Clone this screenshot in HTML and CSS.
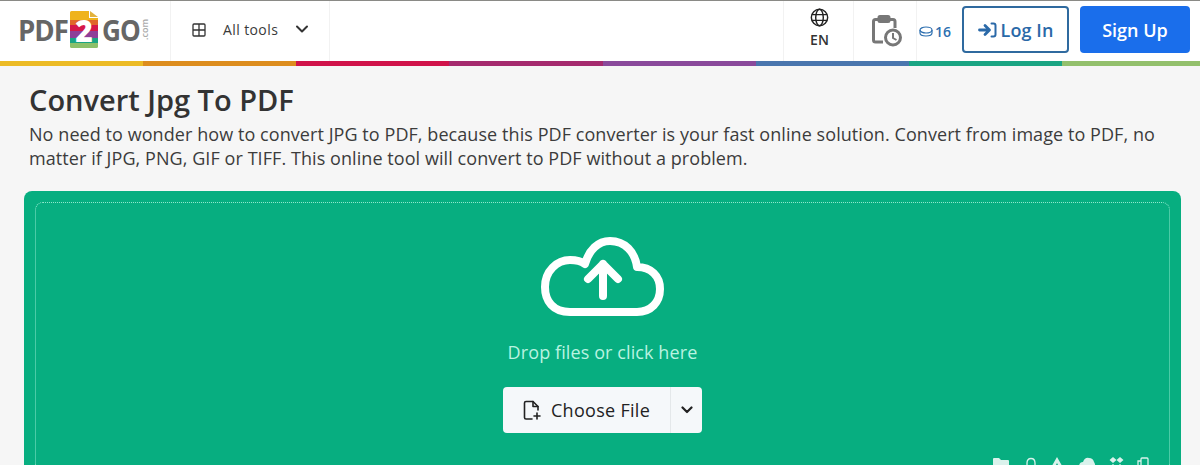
FILE: index.html
```html
<!DOCTYPE html>
<html lang="en">
<head>
    <meta charset="UTF-8">
    <meta name="viewport" content="width=device-width, initial-scale=1.0">
    <title>Convert Jpg To PDF</title>
    <link rel="stylesheet" href="styles.css">
</head>
<body>
    <header class="topbar">
        <a class="logo">
            <span class="logo-word logo-pdf">PDF</span>
            <span class="logo-badge">
                <svg width="28" height="37" viewBox="0 0 28 37">
                    <path d="M1.500 0H19V7H28V9H0V1.500Q0 0 1.500 0Z" fill="#efb31c"/>
                    <path d="M20 0L28 6H20Z" fill="#e3b23c"/>
                    <rect y="9" width="28" height="5" fill="#e0662a"/>
                    <rect y="14" width="28" height="6" fill="#d5174a"/>
                    <rect y="20" width="28" height="7" fill="#8e3f98"/>
                    <rect y="27" width="28" height="5" fill="#1aa583"/>
                    <path d="M0 32H28V35.500Q28 37 26.500 37H1.500Q0 37 0 35.500Z" fill="#8cc06a"/>
                </svg>
                <span class="logo-two">2</span>
            </span>
            <span class="logo-word logo-go">GO</span>
            <span class="logo-com">.com</span>
        </a>
        <button class="tools-btn">
            <svg width="14" height="14" viewBox="0 0 14 14" fill="none" stroke="#333" stroke-width="1.300">
                <rect x="1" y="1" width="12" height="12" rx="1"/>
                <path d="M7 1V13M1 7H13"/>
            </svg>
            <span>All tools</span>
            <svg class="tools-caret" width="14" height="9" viewBox="0 0 14 9" fill="none" stroke="#333" stroke-width="2" stroke-linecap="round" stroke-linejoin="round">
                <path d="M2 1.500L7 6.500L12 1.500"/>
            </svg>
        </button>
        <div class="spacer"></div>
        <div class="lang-cell">
            <svg width="19" height="19" viewBox="0 0 20 20" fill="none" stroke="#222" stroke-width="1.500">
                <circle cx="10" cy="10" r="8.600"/>
                <ellipse cx="10" cy="10" rx="4" ry="8.600"/>
                <path d="M2 7H18M2 13H18"/>
            </svg>
            <span>EN</span>
        </div>
        <div class="history-cell">
            <svg width="30" height="32" viewBox="0 0 30 32" fill="none" stroke="#777" stroke-width="3">
                <path d="M11 27H3.500Q1.500 27 1.500 25V6.500Q1.500 4.500 3.500 4.500H21Q23 4.500 23 6.500V13"/>
                <rect x="7" y="1.500" width="10" height="5" rx="1" fill="#777"/>
                <circle cx="21" cy="22.500" r="7.500" fill="#fff"/>
                <path d="M21 18V23L24.500 25" stroke-width="2"/>
            </svg>
        </div>
        <div class="credits">
            <svg width="14" height="11" viewBox="0 0 14 11" fill="none" stroke="#2d6fb0" stroke-width="1.200">
                <ellipse cx="7" cy="4" rx="6" ry="3"/>
                <path d="M1 4V7C1 8.700 3.700 10 7 10S13 8.700 13 7V4"/>
            </svg>
            <span>16</span>
        </div>
        <button class="login-btn">
            <svg width="19" height="16" viewBox="0 0 19 16" fill="none" stroke="#2a69a8" stroke-width="2.800" stroke-linecap="round" stroke-linejoin="round">
                <path d="M1.500 8H10M7 3.500L11.500 8L7 12.500"/>
                <path d="M13.500 1.500H15.500Q17.500 1.500 17.500 3.500V12.500Q17.500 14.500 15.500 14.500H13.500" stroke-width="2"/>
            </svg>
            <span>Log In</span>
        </button>
        <button class="signup-btn">Sign Up</button>
    </header>

    <div class="rainbow">
        <i class="c1"></i><i class="c2"></i><i class="c3"></i><i class="c4"></i>
        <i class="c5"></i><i class="c6"></i><i class="c7"></i><i class="c8"></i>
    </div>

    <main class="content">
        <h1>Convert Jpg To PDF</h1>
        <p class="intro">No need to wonder how to convert JPG to PDF, because this PDF converter is your fast online solution. Convert from image to PDF, no matter if JPG, PNG, GIF or TIFF. This online tool will convert to PDF without a problem.</p>

        <section class="dropzone">
            <div class="dropzone-inner">
                <svg class="cloud" width="126" height="82" viewBox="0 0 126 82" fill="none" stroke="#fff" stroke-width="8" stroke-linecap="round" stroke-linejoin="round">
                    <path d="M30 77C13 77 5 66 5 52C5 36 17 25 30 25C36 25 41 26 45 29C49 15 58 6 70 6C85 6 95 17 97 32C111 32 120 41 120 54C120 67 111 77 97 77Z"/>
                    <path d="M63 61V29M48 44L63 29L78 44"/>
                </svg>
                <p class="drop-text">Drop files or click here</p>
                <div class="choose">
                    <button class="choose-main">
                        <svg width="19" height="21" viewBox="0 0 19 21" fill="none" stroke="#222" stroke-width="1.600" stroke-linecap="round" stroke-linejoin="round">
                            <path d="M9 19H3Q1.500 19 1.500 17.500V3Q1.500 1.500 3 1.500H10L15 6.500V10"/>
                            <path d="M10 1.500V6.500H15"/>
                            <path d="M14 13V19M11 16H17"/>
                        </svg>
                        <span>Choose File</span>
                    </button>
                    <button class="choose-more">
                        <svg width="12" height="8" viewBox="0 0 12 8" fill="none" stroke="#222" stroke-width="2.200" stroke-linecap="round" stroke-linejoin="round">
                            <path d="M1.500 1.500L6 6L10.500 1.500"/>
                        </svg>
                    </button>
                </div>
                <div class="sources">
                    <svg width="16" height="14" viewBox="0 0 16 14" fill="#fff" opacity=".85"><path d="M0 2Q0 1 1 1H6L8 3H15Q16 3 16 4V13H0Z"/></svg>
                    <svg width="14" height="14" viewBox="0 0 14 14" fill="none" stroke="#fff" stroke-width="1.300" opacity=".85"><path d="M5 12V6Q5 1.500 9 1.500T13 6V10"/></svg>
                    <svg width="16" height="14" viewBox="0 0 16 14" fill="#fff" opacity=".85"><path d="M8 0L16 14H0ZM8 6L5 12H11Z" fill-rule="evenodd"/></svg>
                    <svg width="18" height="14" viewBox="0 0 18 14" fill="#fff" opacity=".85"><path d="M1 10Q1 5 5 5Q7 0 11 1Q15 1 16 5Q18 8 17 14H4Q1 13 1 10Z"/></svg>
                    <svg width="15" height="14" viewBox="0 0 14 14" fill="#fff" opacity=".85"><path d="M3.500 0L7 3L3.500 6L0 3ZM10.500 0L14 3L10.500 6L7 3ZM3.500 7L7 10L3.500 13L0 10ZM10.500 7L14 10L10.500 13L7 10Z"/></svg>
                    <svg width="12" height="14" viewBox="0 0 12 14" fill="none" stroke="#fff" stroke-width="1.300" opacity=".85"><rect x="4" y="1" width="7" height="12" rx="1"/><path d="M4 4H1V13H4"/></svg>
                </div>
            </div>
        </section>
    </main>
</body>
</html>
```

FILE: styles.css
```css
* {
    margin: 0;
    padding: 0;
    box-sizing: border-box;
}

html, body {
    height: 465px;
    overflow: hidden;
}

body {
    font-family: "Open Sans", "Liberation Sans", sans-serif;
    background: #f6f6f6;
    color: #333;
}

button {
    font-family: inherit;
    border: none;
    background: none;
}

/* top bar */
.topbar {
    display: flex;
    align-items: stretch;
    height: 61px;
    background: #fff;
    border-top: 1px solid #8a8a86;
}

.logo {
    width: 171px;
    padding: 0 0 3px 18px;
    display: flex;
    align-items: center;
    border-right: 1px solid #f2f2f2;
}

.logo-word {
    font-size: 29px;
    font-weight: 700;
    color: #666;
    letter-spacing: -1px;
    transform-origin: left;
}

.logo-pdf {
    width: 52px;
    transform: scaleX(.95);
}

.logo-go {
    width: 38px;
    margin-left: 4px;
    transform: scaleX(.9);
}

.logo-badge {
    position: relative;
    display: flex;
    width: 28px;
    height: 37px;
}

.logo-two {
    position: absolute;
    inset: 0;
    text-align: center;
    color: #fff;
    font-size: 30px;
    font-weight: 800;
    line-height: 39px;
}

.logo-com {
    writing-mode: vertical-rl;
    transform: rotate(180deg);
    font-size: 9px;
    font-weight: 600;
    color: #aaa;
    margin-left: -2px;
}

.tools-btn {
    width: 159px;
    display: flex;
    align-items: center;
    padding: 0 0 3px 21px;
    font-size: 14px;
    font-weight: 500;
    color: #3a3a3a;
    letter-spacing: .4px;
    border-right: 1px solid #f2f2f2;
}

.tools-btn span {
    margin-left: 17px;
}

.tools-caret {
    margin-left: 17px;
}

.spacer {
    flex: 1;
}

.lang-cell {
    width: 71px;
    display: flex;
    flex-direction: column;
    align-items: center;
    justify-content: center;
    gap: 4px;
    padding: 0 0 6px 2px;
    font-size: 14px;
    line-height: 18px;
    font-weight: 600;
    color: #333;
    border-left: 1px solid #f2f2f2;
    border-right: 1px solid #f2f2f2;
}

.history-cell {
    width: 63px;
    display: flex;
    align-items: center;
    justify-content: center;
    padding: 0 0 1px 3px;
    border-right: 1px solid #f2f2f2;
}

.credits {
    width: 44px;
    margin-right: 1px;
    padding-right: 8px;
    display: flex;
    align-items: center;
    justify-content: center;
    gap: 2px;
    font-size: 14px;
    font-weight: 600;
    color: #2d6fb0;
}

.login-btn {
    width: 107px;
    height: 47px;
    margin-top: 5px;
    display: flex;
    align-items: center;
    justify-content: center;
    gap: 4px;
    font-size: 18px;
    font-weight: 600;
    color: #2a69a8;
    letter-spacing: .1px;
    border: 2px solid #2f6a9f;
    border-radius: 4px;
}

.signup-btn {
    width: 110px;
    height: 47px;
    margin: 5px 10px 0 11px;
    font-size: 18px;
    font-weight: 600;
    color: #fff;
    background: #1a6eeb;
    border-radius: 4px;
}

/* colour strip under the bar */
.rainbow {
    display: flex;
    height: 5px;
}

.rainbow i {
    flex: 153 0 0;
}

.rainbow .c1 { flex-grow: 143; background: #ecbb25; }
.rainbow .c2 { background: #dd8d1e; }
.rainbow .c3 { background: #d0134a; }
.rainbow .c4 { background: #a52a6e; }
.rainbow .c5 { background: #8a4a9b; }
.rainbow .c6 { background: #4a76ae; }
.rainbow .c7 { background: #1aa583; }
.rainbow .c8 { flex-grow: 138; background: #93c06c; }

/* main */
.content {
    padding: 0 19px 0 24px;
}

h1 {
    margin: 15px 0 0 5px;
    font-size: 29px;
    font-weight: 600;
    line-height: 38px;
    color: #333;
}

.intro {
    margin: 4px 0 0 5px;
    font-size: 18px;
    letter-spacing: .07px;
    line-height: 23.500px;
    color: #3c3c3c;
}

.dropzone {
    margin-top: 21px;
    height: 274px;
    padding: 11px 11px 0;
    overflow: hidden;
    background: #07ae80;
    border-radius: 8px 8px 0 0;
}

.dropzone-inner {
    height: 100%;
    padding-top: 32px;
    display: flex;
    flex-direction: column;
    align-items: center;
    border: 1px dotted #8fe8cc;
    border-bottom: none;
    border-radius: 8px 8px 0 0;
}

.dropzone-inner > * {
    flex-shrink: 0;
}

.drop-text {
    margin-top: 22px;
    font-size: 18px;
    letter-spacing: .1px;
    line-height: 26px;
    color: #b9f3e0;
}

.choose {
    margin-top: 22px;
    display: flex;
    height: 46px;
    background: #f5f8fa;
    border-radius: 4px;
}

.choose-main {
    width: 168px;
    display: flex;
    align-items: center;
    justify-content: center;
    gap: 9px;
    font-size: 18px;
    font-weight: 500;
    letter-spacing: .3px;
    color: #222;
    border-right: 1px solid #e4e8ea;
}

.choose-more {
    width: 31px;
    display: flex;
    align-items: center;
    justify-content: center;
}

.sources {
    align-self: flex-end;
    margin: 24px 20px 0 0;
    height: 8px;
    display: flex;
    gap: 13px;
    align-items: flex-start;
}
```
